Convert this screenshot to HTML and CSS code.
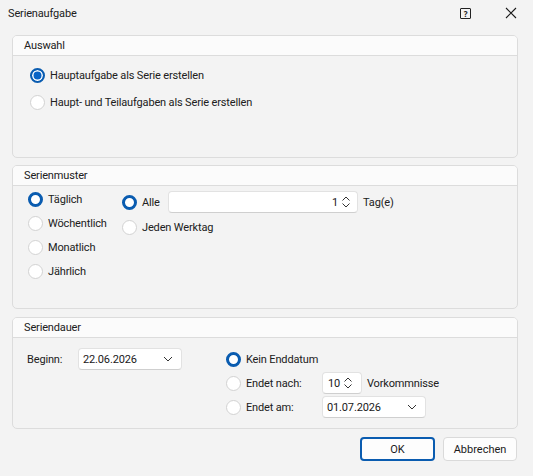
FILE: index.html
```html
<!DOCTYPE html>
<html lang="de">
<head>
    <title>Serienaufgabe</title>
    <link rel="stylesheet" href="styles.css">
</head>
<body>
    <div class="dialog">
        <div class="titlebar">
            <span class="title">Serienaufgabe</span>
            <span class="help">?</span>
            <svg class="close" width="12" height="12" viewBox="0 0 12 12">
                <path d="M1 1L11 11M11 1L1 11" stroke="#1a1a1a" stroke-width="1.1" fill="none"/>
            </svg>
        </div>

        <!-- Auswahl -->
        <div class="group group-select">
            <div class="group-title">Auswahl</div>
            <div class="group-body select-body">
                <label class="option tall"><span class="radio filled"></span>Hauptaufgabe als Serie erstellen</label>
                <label class="option tall"><span class="radio"></span>Haupt- und Teilaufgaben als Serie erstellen</label>
            </div>
        </div>

        <!-- Serienmuster -->
        <div class="group group-pattern">
            <div class="group-title">Serienmuster</div>
            <div class="group-body pattern-body">
                <div class="pattern-kinds">
                    <label class="option"><span class="radio ring"></span>Täglich</label>
                    <label class="option"><span class="radio"></span>Wöchentlich</label>
                    <label class="option"><span class="radio"></span>Monatlich</label>
                    <label class="option"><span class="radio"></span>Jährlich</label>
                </div>
                <div class="pattern-detail">
                    <div class="option first">
                        <span class="radio ring"></span><span class="alle">Alle</span>
                        <div class="field spin wide">
                            <span class="value">1</span>
                            <svg width="10" height="14" viewBox="0 0 10 14">
                                <path d="M1.5 5.5L5 2L8.5 5.5M1.5 8.5L5 12L8.5 8.5" stroke="#333" stroke-width="1" fill="none"/>
                            </svg>
                        </div>
                        <span class="unit">Tag(e)</span>
                    </div>
                    <label class="option second"><span class="radio"></span>Jeden Werktag</label>
                </div>
            </div>
        </div>

        <!-- Seriendauer -->
        <div class="group group-range">
            <div class="group-title">Seriendauer</div>
            <div class="group-body range-body">
                <div class="range-start">
                    <span class="start-label">Beginn:</span>
                    <div class="field date start-date">
                        <span>22.06.2026</span>
                        <svg width="10" height="6" viewBox="0 0 10 6">
                            <path d="M1 1L5 5L9 1" stroke="#333" stroke-width="1" fill="none"/>
                        </svg>
                    </div>
                </div>
                <div class="range-end">
                    <label class="option"><span class="radio ring"></span>Kein Enddatum</label>
                    <div class="option">
                        <span class="radio"></span><span class="end-label">Endet nach:</span>
                        <div class="field spin small">
                            <span class="value">10</span>
                            <svg width="10" height="14" viewBox="0 0 10 14">
                                <path d="M1.5 5.5L5 2L8.5 5.5M1.5 8.5L5 12L8.5 8.5" stroke="#333" stroke-width="1" fill="none"/>
                            </svg>
                        </div>
                        <span class="unit">Vorkommnisse</span>
                    </div>
                    <div class="option">
                        <span class="radio"></span><span class="end-label">Endet am:</span>
                        <div class="field date end-date">
                            <span>01.07.2026</span>
                            <svg width="10" height="6" viewBox="0 0 10 6">
                                <path d="M1 1L5 5L9 1" stroke="#333" stroke-width="1" fill="none"/>
                            </svg>
                        </div>
                    </div>
                </div>
            </div>
        </div>

        <div class="buttons">
            <button class="btn default">OK</button>
            <button class="btn">Abbrechen</button>
        </div>
    </div>
</body>
</html>
```

FILE: styles.css
```css
body {
    margin: 0;
    background: #f3f3f3;
    font-family: Roboto, "Noto Sans", sans-serif;
    font-size: 11px;
    letter-spacing: -0.15px;
    color: #202020;
}

.dialog {
    width: 533px;
    height: 476px;
    display: flex;
    flex-direction: column;
}

.titlebar {
    height: 26px;
    display: flex;
    align-items: center;
    padding-left: 8px;
    margin-bottom: 9px;
}

.title {
    flex: 1;
}

.help {
    width: 9px;
    height: 9px;
    border: 1.3px solid #222;
    border-radius: 1px;
    font-family: "Noto Sans", sans-serif;
    font-size: 8px;
    font-weight: bold;
    line-height: 9px;
    text-align: center;
    margin-right: 34px;
}

.close {
    margin-right: 16px;
}

.group {
    margin: 0 15px 0 12px;
    border: 1px solid #dcdcdc;
    border-radius: 5px;
    box-sizing: border-box;
    display: flex;
    flex-direction: column;
    overflow: hidden;
}

.group-select { height: 123px; }
.group-pattern { height: 144px; margin-top: 7px; }
.group-range { height: 112px; margin-top: 8px; }

.group-title {
    height: 19px;
    line-height: 19px;
    padding-left: 11px;
    background: #fbfbfb;
    border-bottom: 1px solid #dcdcdc;
}

.group-body {
    flex: 1;
}

.option {
    display: flex;
    align-items: center;
    height: 24px;
    white-space: nowrap;
}

.option.tall {
    height: 27px;
}

.radio {
    width: 15px;
    height: 15px;
    box-sizing: border-box;
    border-radius: 50%;
    border: 1px solid #d2d2d2;
    background: #fff;
    margin-right: 5px;
    flex: none;
}

.radio.filled {
    border: 2px solid #0a5cb0;
    background: #0a64c6;
    box-shadow: inset 0 0 0 1.5px #fff;
}

.radio.ring {
    border: 3.5px solid #0a5cb0;
}

/* Auswahl */
.select-body {
    padding: 6px 0 0 17px;
}

/* Serienmuster */
.pattern-body {
    display: flex;
    padding: 1px 0 0 15px;
}

.pattern-kinds {
    width: 94px;
}

.pattern-detail {
    padding-top: 4px;
}

.option.first {
    height: 22px;
}

.option.second {
    height: 28px;
}

.alle {
    width: 26px;
}

.field {
    display: flex;
    align-items: center;
    box-sizing: border-box;
    height: 22px;
    background: #fff;
    border: 1px solid #e2e2e2;
    border-bottom-color: #cfcfcf;
    border-radius: 4px;
    padding: 0 6px 0 4px;
}

.spin {
    justify-content: flex-end;
    gap: 3px;
}

.spin.wide {
    width: 190px;
}

.spin.small {
    width: 40px;
    justify-content: flex-start;
    padding-left: 5px;
}

.unit {
    margin-left: 5px;
}

.date {
    justify-content: space-between;
    padding-right: 8px;
}

/* Seriendauer */
.range-body {
    display: flex;
    padding: 9px 0 0 14px;
}

.range-start {
    display: flex;
    align-items: center;
    height: 24px;
    width: 199px;
}

.start-label {
    width: 51px;
}

.start-date {
    width: 104px;
}

.end-label {
    width: 76px;
}

.end-date {
    width: 104px;
}

.buttons {
    display: flex;
    justify-content: flex-end;
    gap: 8px;
    margin: 8px 16px 0 0;
}

.btn {
    font: inherit;
    color: #1b1b1b;
    height: 24px;
    width: 74px;
    background: #fdfdfd;
    border: 1px solid #dadada;
    border-radius: 4px;
}

.btn.default {
    width: 75px;
    border: 2px solid #0a5cb0;
}
```
